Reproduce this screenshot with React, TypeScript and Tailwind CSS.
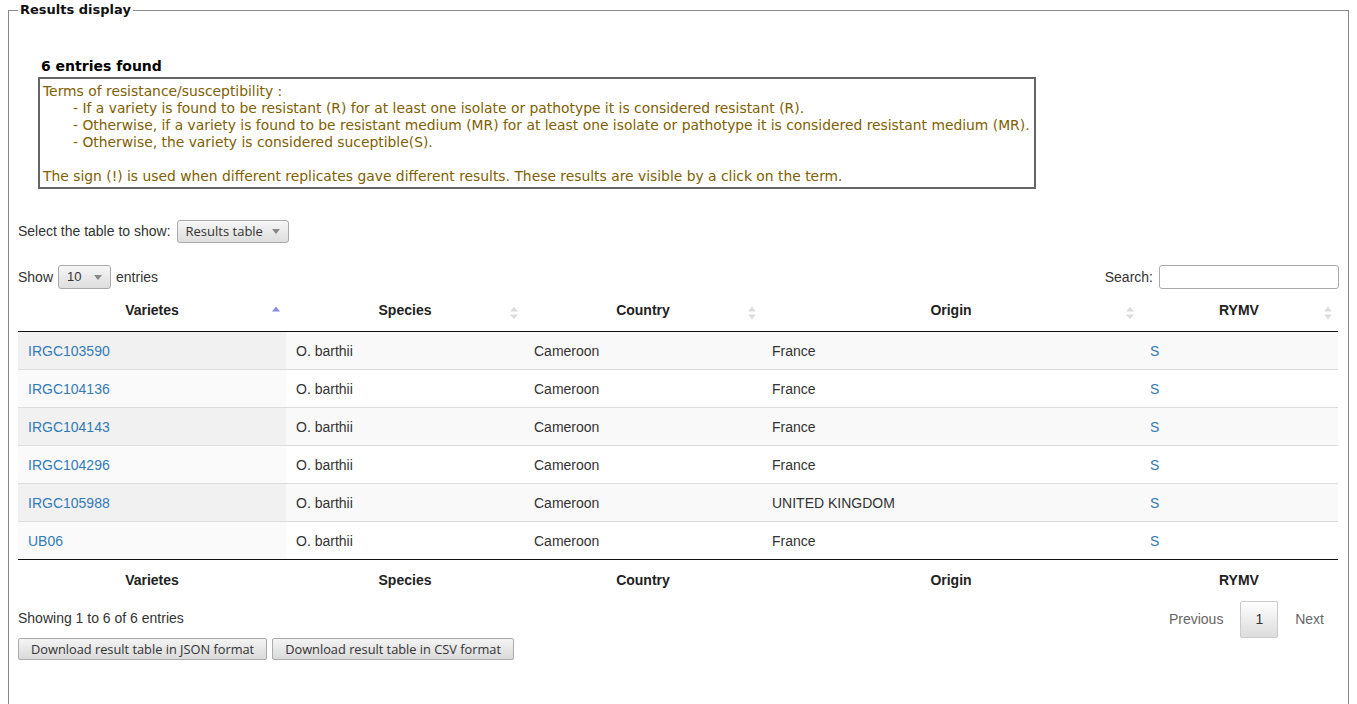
import React from "react";

const rows = [
  { v: "IRGC103590", s: "O. barthii", c: "Cameroon", o: "France", r: "S" },
  { v: "IRGC104136", s: "O. barthii", c: "Cameroon", o: "France", r: "S" },
  { v: "IRGC104143", s: "O. barthii", c: "Cameroon", o: "France", r: "S" },
  { v: "IRGC104296", s: "O. barthii", c: "Cameroon", o: "France", r: "S" },
  { v: "IRGC105988", s: "O. barthii", c: "Cameroon", o: "UNITED KINGDOM", r: "S" },
  { v: "UB06", s: "O. barthii", c: "Cameroon", o: "France", r: "S" },
];

function SortBoth() {
  return (
    <svg width="8" height="13" viewBox="0 0 8 13" className="absolute right-[6px] top-1/2 -translate-y-1/2">
      <path d="M4 0 L8 5 L0 5 Z" fill="#dddddd" />
      <path d="M0 8 L8 8 L4 13 Z" fill="#dddddd" />
    </svg>
  );
}

function SortAsc() {
  return (
    <svg width="8" height="13" viewBox="0 0 8 13" className="absolute right-[6px] top-1/2 -translate-y-1/2">
      <path d="M4 0 L8 5 L0 5 Z" fill="#8a8ae0" />
    </svg>
  );
}

function Caret() {
  return (
    <svg width="8" height="5" viewBox="0 0 8 5">
      <path d="M0 0 L8 0 L4 5 Z" fill="#888888" />
    </svg>
  );
}

export default function App() {
  const heads = [
    { t: "Varietes", w: "w-[268px]" },
    { t: "Species", w: "w-[238px]" },
    { t: "Country", w: "w-[238px]" },
    { t: "Origin", w: "w-[378px]" },
    { t: "RYMV", w: "w-[198px]" },
  ];
  return (
    <div className="bg-white min-h-[704px] pt-[2px] font-['Liberation_Sans',Arial,sans-serif] text-[14px] text-[#333]">
      <fieldset className="mx-2 border border-[#888] px-[9px] pb-[60px]">
        <legend className="px-[2px] font-['DejaVu_Sans',Verdana,sans-serif] font-bold text-[13px] leading-[16px] text-[#111]">
          Results display
        </legend>

        <div className="ml-[20px] mt-[40px]">
          <div className="pl-[3px] font-['DejaVu_Sans',Verdana,sans-serif] font-bold text-[14px] leading-[17px] text-black">
            6 entries found
          </div>
          <div className="mt-[2px] w-[998px] border-2 border-[#666] pl-[3px] pr-[2px] pt-[4px] pb-[2px] whitespace-nowrap font-['DejaVu_Sans',Verdana,sans-serif] text-[13.86px] leading-[17px] text-[#806000]">
            <div>Terms of resistance/susceptibility :</div>
            <div className="pl-[30px]">- If a variety is found to be resistant (R) for at least one isolate or pathotype it is considered resistant (R).</div>
            <div className="pl-[30px]">- Otherwise, if a variety is found to be resistant medium (MR) for at least one isolate or pathotype it is considered resistant medium (MR).</div>
            <div className="pl-[30px]">- Otherwise, the variety is considered suceptible(S).</div>
            <div className="h-[17px]"></div>
            <div>The sign (!) is used when different replicates gave different results. These results are visible by a click on the term.</div>
          </div>
        </div>

        <div className="mt-[31px] flex items-center h-[23px]">
          <span className="mr-[6px]">Select the table to show:</span>
          <div className="h-[23px] flex items-center gap-[9px] pl-[8px] pr-[8px] border border-[#aaa] rounded-[3px] bg-gradient-to-b from-[#f6f6f6] to-[#dedede] font-['Open_Sans',sans-serif] text-[13px] text-[#333]">
            <span>Results table</span>
            <Caret />
          </div>
        </div>

        <div className="mt-[22px] flex items-center justify-between h-[24px]">
          <div className="flex items-center">
            <span>Show</span>
            <div className="mx-[5px] w-[53px] h-[24px] flex items-center justify-between pl-[8px] pr-[8px] border border-[#aaa] rounded-[3px] bg-gradient-to-b from-[#f6f6f6] to-[#dedede] text-[13px]">
              <span>10</span>
              <Caret />
            </div>
            <span>entries</span>
          </div>
          <div className="flex items-center">
            <span className="mr-[6px]">Search:</span>
            <div className="w-[180px] h-[24px] border border-[#aaa] rounded-[3px] bg-white"></div>
          </div>
        </div>

        <table className="mt-[5px] w-[1320px] table-fixed border-collapse">
          <thead>
            <tr>
              {heads.map((h, i) => (
                <th
                  key={h.t}
                  className={`${h.w} relative pt-[8px] pb-[13px] leading-[16px] text-center font-bold text-[#222] border-b border-[#111]`}
                >
                  {h.t}
                  {i === 0 ? <SortAsc /> : <SortBoth />}
                </th>
              ))}
            </tr>
          </thead>
          <tbody>
            {rows.map((r, i) => {
              const odd = i % 2 === 0;
              const base = odd ? "bg-[#f9f9f9]" : "bg-white";
              const sorted = odd ? "bg-[#f1f1f1]" : "bg-[#fafafa]";
              const bt = i === 0 ? "h-[38px]" : "border-t border-[#ddd] h-[38px]";
              return (
                <tr key={r.v}>
                  <td className={`${sorted} ${bt} px-[10px] leading-[20px] text-[#337ab7]`}>{r.v}</td>
                  <td className={`${base} ${bt} px-[10px] leading-[20px]`}>{r.s}</td>
                  <td className={`${base} ${bt} px-[10px] leading-[20px]`}>{r.c}</td>
                  <td className={`${base} ${bt} px-[10px] leading-[20px]`}>{r.o}</td>
                  <td className={`${base} ${bt} px-[10px] leading-[20px] text-[#337ab7]`}>{r.r}</td>
                </tr>
              );
            })}
          </tbody>
          <tfoot>
            <tr>
              {heads.map((h) => (
                <th key={h.t} className="pt-[11px] pb-[6px] leading-[18px] text-center font-bold text-[#222] border-t border-[#111]">
                  {h.t}
                </th>
              ))}
            </tr>
          </tfoot>
        </table>

        <div className="flex justify-between items-start">
          <div className="pt-[13px] leading-[20px]">Showing 1 to 6 of 6 entries</div>
          <div className="pt-[6px] flex items-center">
            <span className="px-[14px] h-[37px] flex items-center text-[#666] border border-transparent">Previous</span>
            <span className="ml-[2px] px-[14px] h-[37px] flex items-center border border-[#cacaca] rounded-[2px] bg-gradient-to-b from-white to-[#dcdcdc] text-[#333]">1</span>
            <span className="ml-[2px] px-[14px] h-[37px] flex items-center text-[#666] border border-transparent">Next</span>
          </div>
        </div>

        <div className="flex gap-[5px]">
          <button className="h-[22px] px-[12px] border border-[#aaa] rounded-[2px] bg-gradient-to-b from-[#f4f4f4] to-[#dadada] font-['Open_Sans',sans-serif] text-[12.8px] leading-[18px] text-[#333]">
            Download result table in JSON format
          </button>
          <button className="h-[22px] px-[12px] border border-[#aaa] rounded-[2px] bg-gradient-to-b from-[#f4f4f4] to-[#dadada] font-['Open_Sans',sans-serif] text-[12.8px] leading-[18px] text-[#333]">
            Download result table in CSV format
          </button>
        </div>
      </fieldset>
    </div>
  );
}
